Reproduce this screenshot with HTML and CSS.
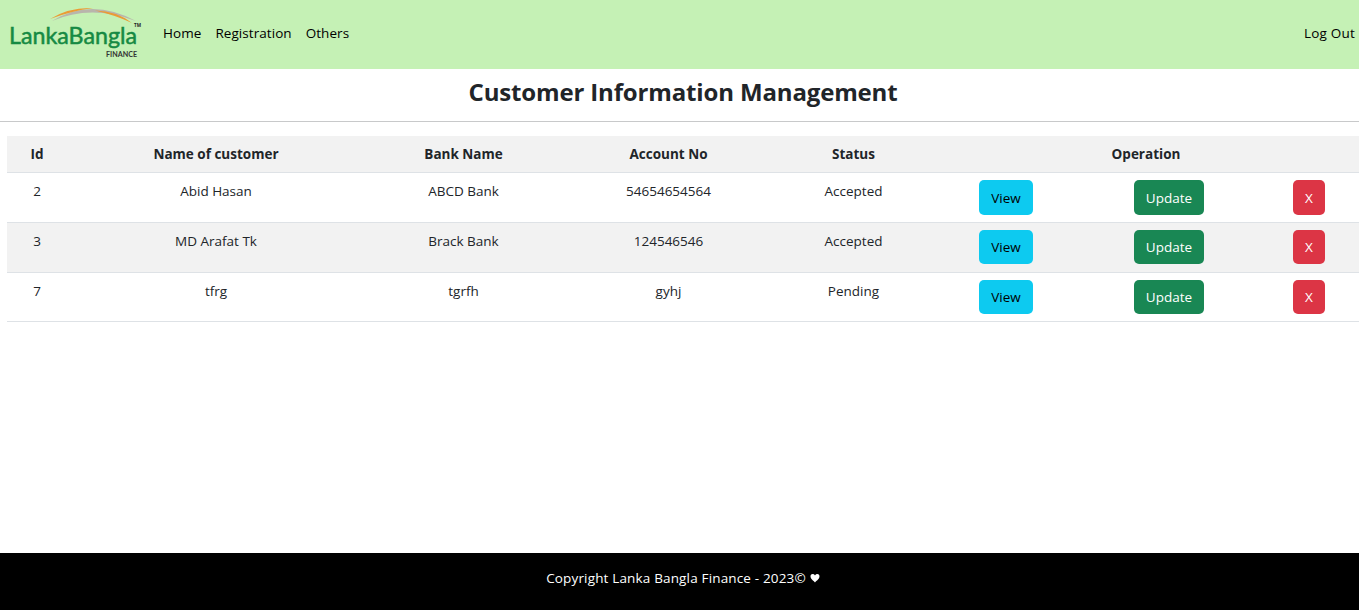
FILE: index.html
```html
<!DOCTYPE html>
<html lang="en">
<head>
<meta charset="utf-8">
<title>Customer Information Management</title>
<link rel="stylesheet" href="styles.css">
</head>
<body>
<header class="navbar">
  <a class="brand" aria-label="LankaBangla Finance">
    <svg width="136" height="54" viewBox="0 0 136 54">
      <path d="M45 15 Q84-9 129 15 Q84-2 45 15Z" fill="#b9b5ac"/>
      <path d="M43 13 Q62 1 86 2 Q64 5 43 13Z" fill="#eb9b35"/>
      <path d="M88 4.500 Q110 5 125 17 Q108 9 88 4.500Z" fill="#eb9b35"/>
      <text class="logo-name" x="2" y="37.500" textLength="128" lengthAdjust="spacingAndGlyphs">LankaBangla</text>
      <text class="logo-tm" x="127" y="21" textLength="7" lengthAdjust="spacingAndGlyphs">TM</text>
      <text class="logo-sub" x="99" y="51" textLength="31" lengthAdjust="spacingAndGlyphs">FINANCE</text>
    </svg>
  </a>
  <nav class="links"><a>Home</a><a>Registration</a><a>Others</a></nav>
  <a class="logout">Log Out</a>
</header>
<main>
  <h1 class="title">Customer Information Management</h1>
  <table class="customers">
    <colgroup><col class="c-id"><col class="c-name"><col class="c-bank"><col class="c-account"><col class="c-status"><col class="c-view"><col class="c-update"><col class="c-delete"></colgroup>
    <thead><tr><th>Id</th><th>Name of customer</th><th>Bank Name</th><th>Account No</th><th>Status</th><th colspan="3">Operation</th></tr></thead>
    <tbody>
      <tr class="first"><td>2</td><td>Abid Hasan</td><td>ABCD Bank</td><td>54654654564</td><td>Accepted</td><td><a class="btn view">View</a></td><td><a class="btn update">Update</a></td><td><a class="btn delete">X</a></td></tr>
      <tr class="striped"><td>3</td><td>MD Arafat Tk</td><td>Brack Bank</td><td>124546546</td><td>Accepted</td><td><a class="btn view">View</a></td><td><a class="btn update">Update</a></td><td><a class="btn delete">X</a></td></tr>
      <tr class="last"><td>7</td><td>tfrg</td><td>tgrfh</td><td>gyhj</td><td>Pending</td><td><a class="btn view">View</a></td><td><a class="btn update">Update</a></td><td><a class="btn delete">X</a></td></tr>
    </tbody>
  </table>
</main>
<footer class="footer"><span>Copyright Lanka Bangla Finance - 2023©</span><svg width="10" height="10" viewBox="0 0 10 10"><path d="M5 9.500 C3.500 7.500 .5 6 .5 3.200 C.5.400 4 .200 5 2.400 C6 .200 9.500.400 9.500 3.200 C9.500 6 6.500 7.500 5 9.500Z" fill="#fff"/></svg></footer>
</body>
</html>
```
FILE: styles.css
```css
* { box-sizing: border-box; }
body {
  margin: 0;
  height: 610px;
  display: flex;
  flex-direction: column;
  overflow: hidden;
  background: #fff;
  color: #212529;
  font: 13.5px/22px "Open Sans", "Noto Sans", sans-serif;
}
.navbar {
  height: 69px;
  flex: none;
  display: flex;
  align-items: flex-start;
  padding: 6px 4px 0 7px;
  background: #c5f1b5;
  color: #000;
}
.brand { display: block; height: 54px; margin-right: 20px; }
.brand svg { display: block; }
.logo-name { font: 400 22.5px "Lato", sans-serif; fill: #168a43; stroke: #168a43; stroke-width: .5px; }
.logo-tm { font: 700 5px "Open Sans", sans-serif; fill: #222; }
.logo-sub { font: 700 7px "Lato", sans-serif; fill: #333; }
.links { display: flex; gap: 14px; padding-top: 16px; letter-spacing: .06px; }
.logout { margin-left: auto; padding-top: 16px; letter-spacing: .2px; }
main { flex: 1; }
.title {
  height: 53px;
  margin: 0 0 14px;
  padding: 6px 0 0 7px;
  border-bottom: 1px solid #c8c9ca;
  text-align: center;
  font-size: 24px;
  line-height: 34px;
  font-weight: 700;
  letter-spacing: -.15px;
}
.customers {
  width: 1353px;
  margin-left: 7px;
  table-layout: fixed;
  border-spacing: 0;
  text-align: center;
}
.c-id { width: 60px; }
.c-name { width: 298px; }
.c-bank { width: 197px; }
.c-account { width: 213px; }
.c-status { width: 157px; }
.c-view { width: 148px; }
.c-update { width: 178px; }
.c-delete { width: 102px; }
th, td { padding: 7px 0 0; border-bottom: 1px solid #dee2e6; vertical-align: top; }
th { height: 37px; background: #f2f2f2; font-weight: 700; }
td { height: 50px; }
.last td { height: 49px; }
.striped td { background: #f2f2f2; }
.btn {
  display: block;
  height: 34px;
  margin: 0 auto;
  border-radius: 5px;
  line-height: 34px;
  color: #fff;
}
.first .btn { height: 35px; line-height: 36px; }
.btn.view { width: 54px; background: #0dcaf0; color: #000; }
.btn.update { width: 70px; background: #198754; }
.btn.delete { width: 32px; background: #dc3545; }
.footer {
  height: 57px;
  flex: none;
  display: flex;
  justify-content: center;
  padding: 14px 0 0 7px;
  background: #000;
  color: #fff;
  letter-spacing: .16px;
}
.footer svg { margin: 6px 0 0 4px; }
```
